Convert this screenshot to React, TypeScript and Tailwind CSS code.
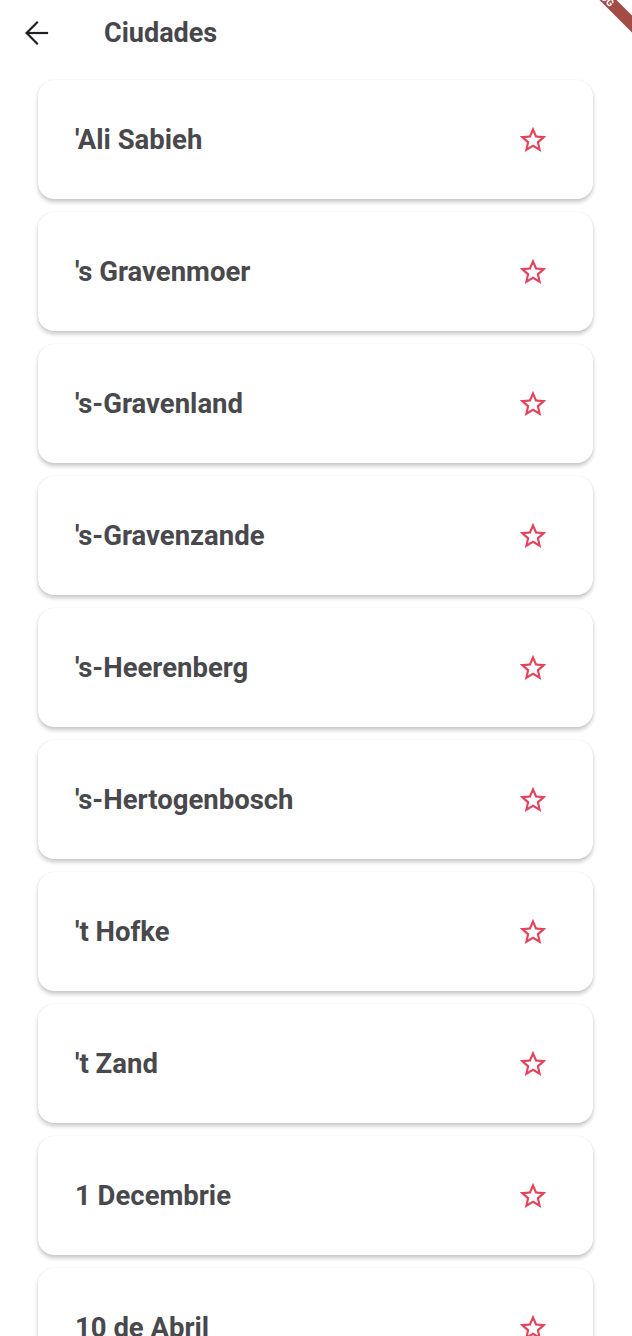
import React from 'react';

const cities = [
  "'Ali Sabieh",
  "'s Gravenmoer",
  "'s-Gravenland",
  "'s-Gravenzande",
  "'s-Heerenberg",
  "'s-Hertogenbosch",
  "'t Hofke",
  "'t Zand",
  '1 Decembrie',
  '10 de Abril',
];

const StarOutline = () => (
  <svg width="32" height="32" viewBox="0 0 24 24" fill="#e3425b">
    <path d="M22 9.24l-7.19-.62L12 2 9.19 8.63 2 9.24l5.46 4.73L5.82 21 12 17.27 18.18 21l-1.63-7.03L22 9.24zM12 15.4l-3.76 2.27 1-4.28-3.32-2.88 4.38-.38L12 6.1l1.71 4.04 4.38.38-3.32 2.88 1 4.28L12 15.4z" />
  </svg>
);

const BackArrow = () => (
  <svg width="32" height="32" viewBox="0 0 32 32" fill="none" stroke="#1f1f23" strokeWidth="2.2" strokeLinecap="square">
    <path d="M6 16h20" />
    <path d="M16 5.5L5.6 16 16 26.5" />
  </svg>
);

const App = () => {
  return (
    <div className="relative h-[1336px] w-full overflow-hidden bg-white" style={{ fontFamily: 'Roboto, "Liberation Sans", sans-serif' }}>
      {/* debug banner */}
      <div className="absolute left-[541px] top-[-13px] flex h-[12px] w-[120px] rotate-45 items-center justify-center bg-[#a34b45] text-[10px] font-bold tracking-wide text-white">
        DEBUG
      </div>

      <header className="flex h-[66px] items-center">
        <div className="ml-[21px] flex h-8 w-8 items-center justify-center">
          <BackArrow />
        </div>
        <h1 className="ml-[51px] text-[27px] font-bold text-[#46464b]">Ciudades</h1>
      </header>

      <div className="flex flex-col gap-[13px] pl-[38px] pr-[39px] pt-[14px]">
        {cities.map((city) => (
          <div
            key={city}
            className="flex h-[119px] shrink-0 items-center justify-between rounded-[16px] bg-white pl-[37px] pr-[44px] shadow-[0_0_1px_rgba(0,0,0,0.12),0_3px_4px_rgba(0,0,0,0.22)]"
          >
            <span className="pt-[1px] text-[27.5px] font-bold text-[#48484d]">{city}</span>
            <StarOutline />
          </div>
        ))}
      </div>
    </div>
  );
};

export default App;
